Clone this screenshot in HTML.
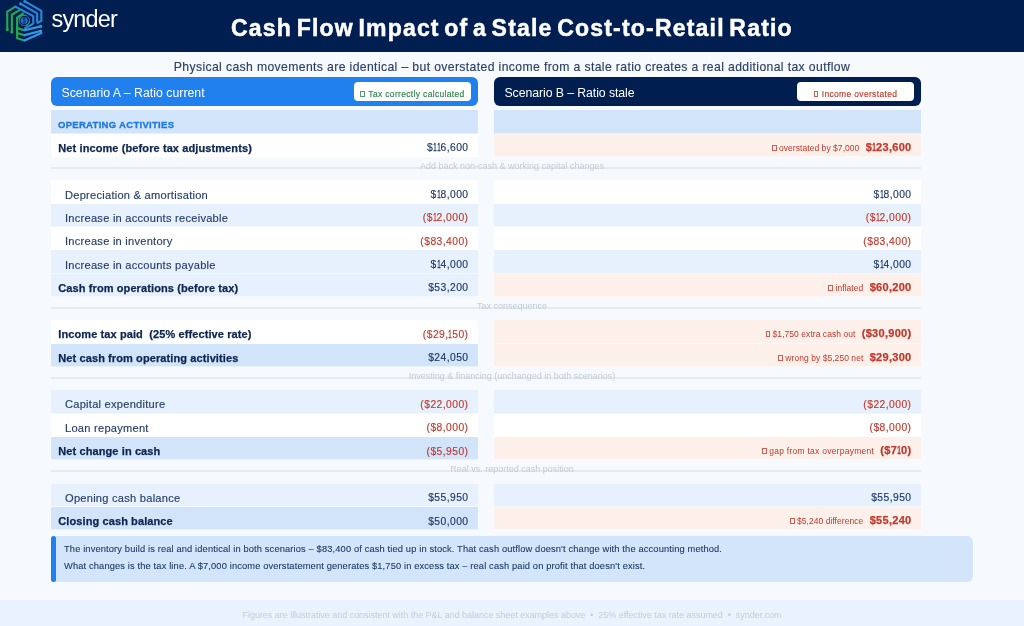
<!DOCTYPE html>
<html><head><meta charset="utf-8">
<style>
*{margin:0;padding:0;box-sizing:border-box}
html,body{width:1024px;height:626px;overflow:hidden}
body{background:#f6f9fe;font-family:"Liberation Sans",sans-serif;position:relative;color:#0d2550}
.hdr{position:absolute;left:0;top:0;width:1024px;height:51.5px;background:#001f50}
.wrap{position:absolute;left:0;top:0;width:1024px;height:626px;will-change:transform}
.logo{position:absolute;left:2px;top:0;width:44px;height:44px}
.brand{position:absolute;left:51.5px;top:4px;font-size:23.5px;line-height:30px;color:#fff;letter-spacing:-0.85px;-webkit-text-stroke:0.7px #001f50;paint-order:stroke fill}
.title{position:absolute;left:231px;top:13px;font-size:23px;line-height:30px;font-weight:bold;color:#fff;letter-spacing:1.2px;word-spacing:-3px;white-space:nowrap;-webkit-text-stroke:0.5px #fff}
.sub{position:absolute;left:173.8px;top:59.3px;font-size:12.2px;line-height:16px;color:#2a3f66;letter-spacing:0.375px;-webkit-text-stroke:0.15px #2a3f66;white-space:nowrap}
.card{position:absolute;top:77px;height:29px;width:427px;border-radius:6px;color:#fff}
.card .ct{position:absolute;left:10.5px;top:1.8px;font-size:12.3px;line-height:29px;white-space:nowrap;letter-spacing:0.01px}
.cardA{left:51px;background:#2080ee}
.cardB{left:494px;background:#001f50}
.badge{position:absolute;top:5.2px;right:6.8px;width:117.3px;height:18.8px;background:#fff;border-radius:4px}
.badge .tofu{margin-right:3.6px;width:4.3px}
.badge span.bt{position:absolute;left:0;width:100%;text-align:center;top:2.9px;font-size:8.5px;line-height:19px;white-space:nowrap;letter-spacing:0.33px;-webkit-text-stroke:0.15px currentColor}
.tofu{display:inline-block;width:4.9px;height:5.8px;border:0.9px solid currentColor;vertical-align:0px;margin-right:2.2px;opacity:.8}
.r{position:absolute;width:427px;height:23.3px;white-space:nowrap;border-bottom:1px solid rgba(255,255,255,.5)}
.r span{position:absolute;top:3.3px;line-height:23.3px}
.r span span{position:static;line-height:inherit}
.lbb{left:7.3px;margin-top:-0.2px;font-weight:bold;font-size:11px;color:#0d2550;letter-spacing:0.1px;-webkit-text-stroke:0.25px #0d2550}
.lbr{left:14px;margin-top:-0.1px;font-size:11.1px;color:#253d6b;letter-spacing:0.25px;-webkit-text-stroke:0.15px #253d6b}
.va{right:9.5px;font-size:10.3px;margin-top:-0.6px;letter-spacing:0.45px;-webkit-text-stroke:0.15px currentColor}
.vb{right:9.5px;font-size:10.3px;margin-top:-0.6px;letter-spacing:0.45px}
.vb.nv,.vb.red{-webkit-text-stroke:0.15px currentColor}
.w{background:#fff}
.lb{background:#e7f1fd}
.sb{background:#d1e4fa}
.pe{background:#fdf0eb}
.red{color:#c0392b}
.nv{color:#1f3864}
.r span.bred{position:relative;top:-0.5px;color:#c0392b;font-weight:bold;font-size:11px;letter-spacing:0.3px;-webkit-text-stroke:0.25px #c0392b}
i.one{font-style:normal;display:inline-block;transform:scaleX(.6);margin:0 -1.3px 0 -1.2px;-webkit-text-stroke:0.35px currentColor}
.r span.note{font-size:8.5px;color:#c0392b;margin-right:6.3px;letter-spacing:0.05px;position:relative;top:-0.8px}
.opl{left:7px;margin-top:-0.4px;font-weight:bold;color:#1c78e6;font-size:9.5px;letter-spacing:0.3px;-webkit-text-stroke:0.3px #1c78e6}
.sec{position:absolute;left:51px;width:870px;height:23.3px}
.sec .line{position:absolute;left:0;top:10.2px;width:870px;height:1.6px;background:#e8ebee}
.sec .st{position:absolute;left:461px;transform:translateX(-50%);top:-0.8px;line-height:21px;font-size:9px;color:#c5cad2;white-space:nowrap}
.box{position:absolute;left:51px;top:536px;width:922px;height:46px;background:#d3e5fa;border-radius:3px 6px 6px 3px;color:#1e3a66}
.bar{position:absolute;left:0;top:0;width:5px;height:46px;border-radius:2.5px;background:#2080ee}
.box p{position:absolute;left:13px;white-space:nowrap;font-size:9.3px;letter-spacing:0.14px;-webkit-text-stroke:0.1px #1e3a66}
.foot{position:absolute;left:0;top:600px;width:1024px;height:26px;background:#e9f2fd}
.foot span{position:absolute;left:242.5px;top:1.8px;line-height:26px;font-size:9px;color:#c5ccd6;white-space:nowrap;letter-spacing:-0.03px}
</style></head><body><div class="wrap">
<div class="hdr">
  <svg class="logo" viewBox="0 0 626 626" fill="none" stroke-linecap="round" stroke-linejoin="round" stroke-width="30">
    <path d="M75 420 V165 L190 95" stroke="#23a94f"/>
    <path d="M140 455 V210 L250 145" stroke="#23a94f"/>
    <path d="M215 400 V250 L300 190" stroke="#23a94f"/>
    <path d="M215 400 V545 L320 575" stroke="#23a94f"/>
    <path d="M215 470 L320 500" stroke="#23a94f"/>
    <path d="M215 400 L320 430" stroke="#23a94f"/>
    <path d="M190 95 L445 230 V335 L330 400" stroke="#2a88dc"/>
    <path d="M265 55 L500 190 V305" stroke="#2a88dc"/>
    <path d="M325 20 L560 155 V295 L505 325" stroke="#2a88dc"/>
    <path d="M320 430 L550 375" stroke="#2f9ae6"/>
    <path d="M320 500 L550 440" stroke="#2f9ae6"/>
    <path d="M320 575 L560 470" stroke="#2f9ae6"/>
    <circle cx="75" cy="420" r="22" fill="#23a94f" stroke="none"/>
    <circle cx="140" cy="455" r="22" fill="#23a94f" stroke="none"/>
    <circle cx="325" cy="20" r="22" fill="#2a88dc" stroke="none"/>
    <circle cx="265" cy="55" r="22" fill="#2a88dc" stroke="none"/>
    <circle cx="550" cy="375" r="22" fill="#2f9ae6" stroke="none"/>
    <circle cx="550" cy="440" r="22" fill="#2f9ae6" stroke="none"/>
    <circle cx="318" cy="290" r="74" stroke="#2a7fd6" stroke-width="14" stroke-dasharray="22 12"/><path d="M246 275 A74 74 0 0 1 330 217" stroke="#23a94f" stroke-width="16" stroke-dasharray="26 10"/><path d="M340 361 A74 74 0 0 0 390 300" stroke="#23a94f" stroke-width="16" stroke-dasharray="26 10"/>
    <circle cx="315" cy="292" r="50" fill="#2a70c8" stroke="none"/>
    <path d="M335 262 Q315 250 298 265 Q290 285 318 290 Q345 297 335 318 Q318 332 295 318 M315 245 V335" stroke="#0b2a66" stroke-width="10"/>
  </svg>
  <div class="brand" id="brand">synder</div>
  <div class="title" id="title">Cash Flow Impact of a Stale Cost-to-Retail Ratio</div>
</div>
<div class="sub" id="sub">Physical cash movements are identical – but overstated income from a stale ratio creates a real additional tax outflow</div>

<div class="card cardA"><span class="ct" id="cA">Scenario A – Ratio current</span><div class="badge"><span class="bt" id="bA" style="color:#2b8449"><span class="tofu"></span>Tax correctly calculated</span></div></div>
<div class="card cardB"><span class="ct" id="cB" style="letter-spacing:-0.08px">Scenario B – Ratio stale</span><div class="badge"><span class="bt" id="bB" style="color:#c0392b"><span class="tofu"></span>Income overstated</span></div></div>

<div class="r sb" style="left:51px;top:110.40px">
<span class="opl" id="op">OPERATING ACTIVITIES</span>
</div>
<div class="r sb" style="left:494px;top:110.40px">
</div>
<div class="r w" style="left:51px;top:133.72px">
<span class="lbb" id="l1">Net income (before tax adjustments)</span>
<span class="va nv" id="va1">$<i class="one">1</i><i class="one">1</i>6,600</span>
</div>
<div class="r pe" style="left:494px;top:133.72px">
<span class="vb"><span class="note" id="n1"><span class="tofu"></span>overstated by $7,000</span><span class="bred" id="vb1">$<i class="one">1</i>23,600</span></span>
</div>
<div class="sec" style="top:157.04px"><div class="line"></div><div class="st" id="s2">Add back non-cash &amp; working capital changes</div></div>
<div class="r w" style="left:51px;top:180.36px">
<span class="lbr" id="l3">Depreciation &amp; amortisation</span>
<span class="va nv" id="va3">$<i class="one">1</i>8,000</span>
</div>
<div class="r w" style="left:494px;top:180.36px">
<span class="vb nv" id="vb3">$<i class="one">1</i>8,000</span>
</div>
<div class="r lb" style="left:51px;top:203.68px">
<span class="lbr" id="l4">Increase in accounts receivable</span>
<span class="va red" id="va4">($<i class="one">1</i>2,000)</span>
</div>
<div class="r lb" style="left:494px;top:203.68px">
<span class="vb red" id="vb4">($<i class="one">1</i>2,000)</span>
</div>
<div class="r w" style="left:51px;top:227.00px">
<span class="lbr" id="l5">Increase in inventory</span>
<span class="va red" id="va5">($83,400)</span>
</div>
<div class="r w" style="left:494px;top:227.00px">
<span class="vb red" id="vb5">($83,400)</span>
</div>
<div class="r lb" style="left:51px;top:250.32px">
<span class="lbr" id="l6">Increase in accounts payable</span>
<span class="va nv" id="va6">$<i class="one">1</i>4,000</span>
</div>
<div class="r lb" style="left:494px;top:250.32px">
<span class="vb nv" id="vb6">$<i class="one">1</i>4,000</span>
</div>
<div class="r lb" style="left:51px;top:273.64px">
<span class="lbb" id="l7">Cash from operations (before tax)</span>
<span class="va nv" id="va7">$53,200</span>
</div>
<div class="r pe" style="left:494px;top:273.64px">
<span class="vb"><span class="note" id="n7"><span class="tofu"></span>inflated</span><span class="bred" id="vb7">$60,200</span></span>
</div>
<div class="sec" style="top:296.96px"><div class="line"></div><div class="st" id="s8">Tax consequence</div></div>
<div class="r w" style="left:51px;top:320.28px">
<span class="lbb" id="l9">Income tax paid&nbsp; (25% effective rate)</span>
<span class="va red" id="va9">($29,<i class="one">1</i>50)</span>
</div>
<div class="r pe" style="left:494px;top:320.28px">
<span class="vb"><span class="note" id="n9"><span class="tofu"></span>$1,750 extra cash out</span><span class="bred" id="vb9">($30,900)</span></span>
</div>
<div class="r sb" style="left:51px;top:343.60px">
<span class="lbb" id="l10">Net cash from operating activities</span>
<span class="va nv" id="va10">$24,050</span>
</div>
<div class="r pe" style="left:494px;top:343.60px">
<span class="vb"><span class="note" id="n10"><span class="tofu"></span>wrong by $5,250 net</span><span class="bred" id="vb10">$29,300</span></span>
</div>
<div class="sec" style="top:366.92px"><div class="line"></div><div class="st" id="s11">Investing &amp; financing (unchanged in both scenarios)</div></div>
<div class="r lb" style="left:51px;top:390.24px">
<span class="lbr" id="l12">Capital expenditure</span>
<span class="va red" id="va12">($22,000)</span>
</div>
<div class="r lb" style="left:494px;top:390.24px">
<span class="vb red" id="vb12">($22,000)</span>
</div>
<div class="r w" style="left:51px;top:413.56px">
<span class="lbr" id="l13">Loan repayment</span>
<span class="va red" id="va13">($8,000)</span>
</div>
<div class="r w" style="left:494px;top:413.56px">
<span class="vb red" id="vb13">($8,000)</span>
</div>
<div class="r sb" style="left:51px;top:436.88px">
<span class="lbb" id="l14">Net change in cash</span>
<span class="va red" id="va14">($5,950)</span>
</div>
<div class="r pe" style="left:494px;top:436.88px">
<span class="vb"><span class="note" id="n14"><span class="tofu"></span><span style="letter-spacing:0.25px">gap from tax overpayment</span></span><span class="bred" id="vb14">($7<i class="one">1</i>0)</span></span>
</div>
<div class="sec" style="top:460.20px"><div class="line"></div><div class="st" id="s15">Real vs. reported cash position</div></div>
<div class="r lb" style="left:51px;top:483.52px">
<span class="lbr" id="l16">Opening cash balance</span>
<span class="va nv" id="va16">$55,950</span>
</div>
<div class="r lb" style="left:494px;top:483.52px">
<span class="vb nv" id="vb16">$55,950</span>
</div>
<div class="r sb" style="left:51px;top:506.84px">
<span class="lbb" id="l17">Closing cash balance</span>
<span class="va nv" id="va17">$50,000</span>
</div>
<div class="r pe" style="left:494px;top:506.84px">
<span class="vb"><span class="note" id="n17"><span class="tofu"></span>$5,240 difference</span><span class="bred" id="vb17">$55,240</span></span>
</div>

<div class="box"><div class="bar"></div>
  <p id="box1" style="top:7.9px">The inventory build is real and identical in both scenarios – $83,400 of cash tied up in stock. That cash outflow doesn't change with the accounting method.</p>
  <p id="box2" style="top:25px">What changes is the tax line. A $7,000 income overstatement generates $1,750 in excess tax – real cash paid on profit that doesn't exist.</p>
</div>
<div class="foot"><span id="foot">Figures are illustrative and consistent with the P&amp;L and balance sheet examples above &nbsp;•&nbsp; 25% effective tax rate assumed &nbsp;•&nbsp; synder.com</span></div>
</div></body></html>
